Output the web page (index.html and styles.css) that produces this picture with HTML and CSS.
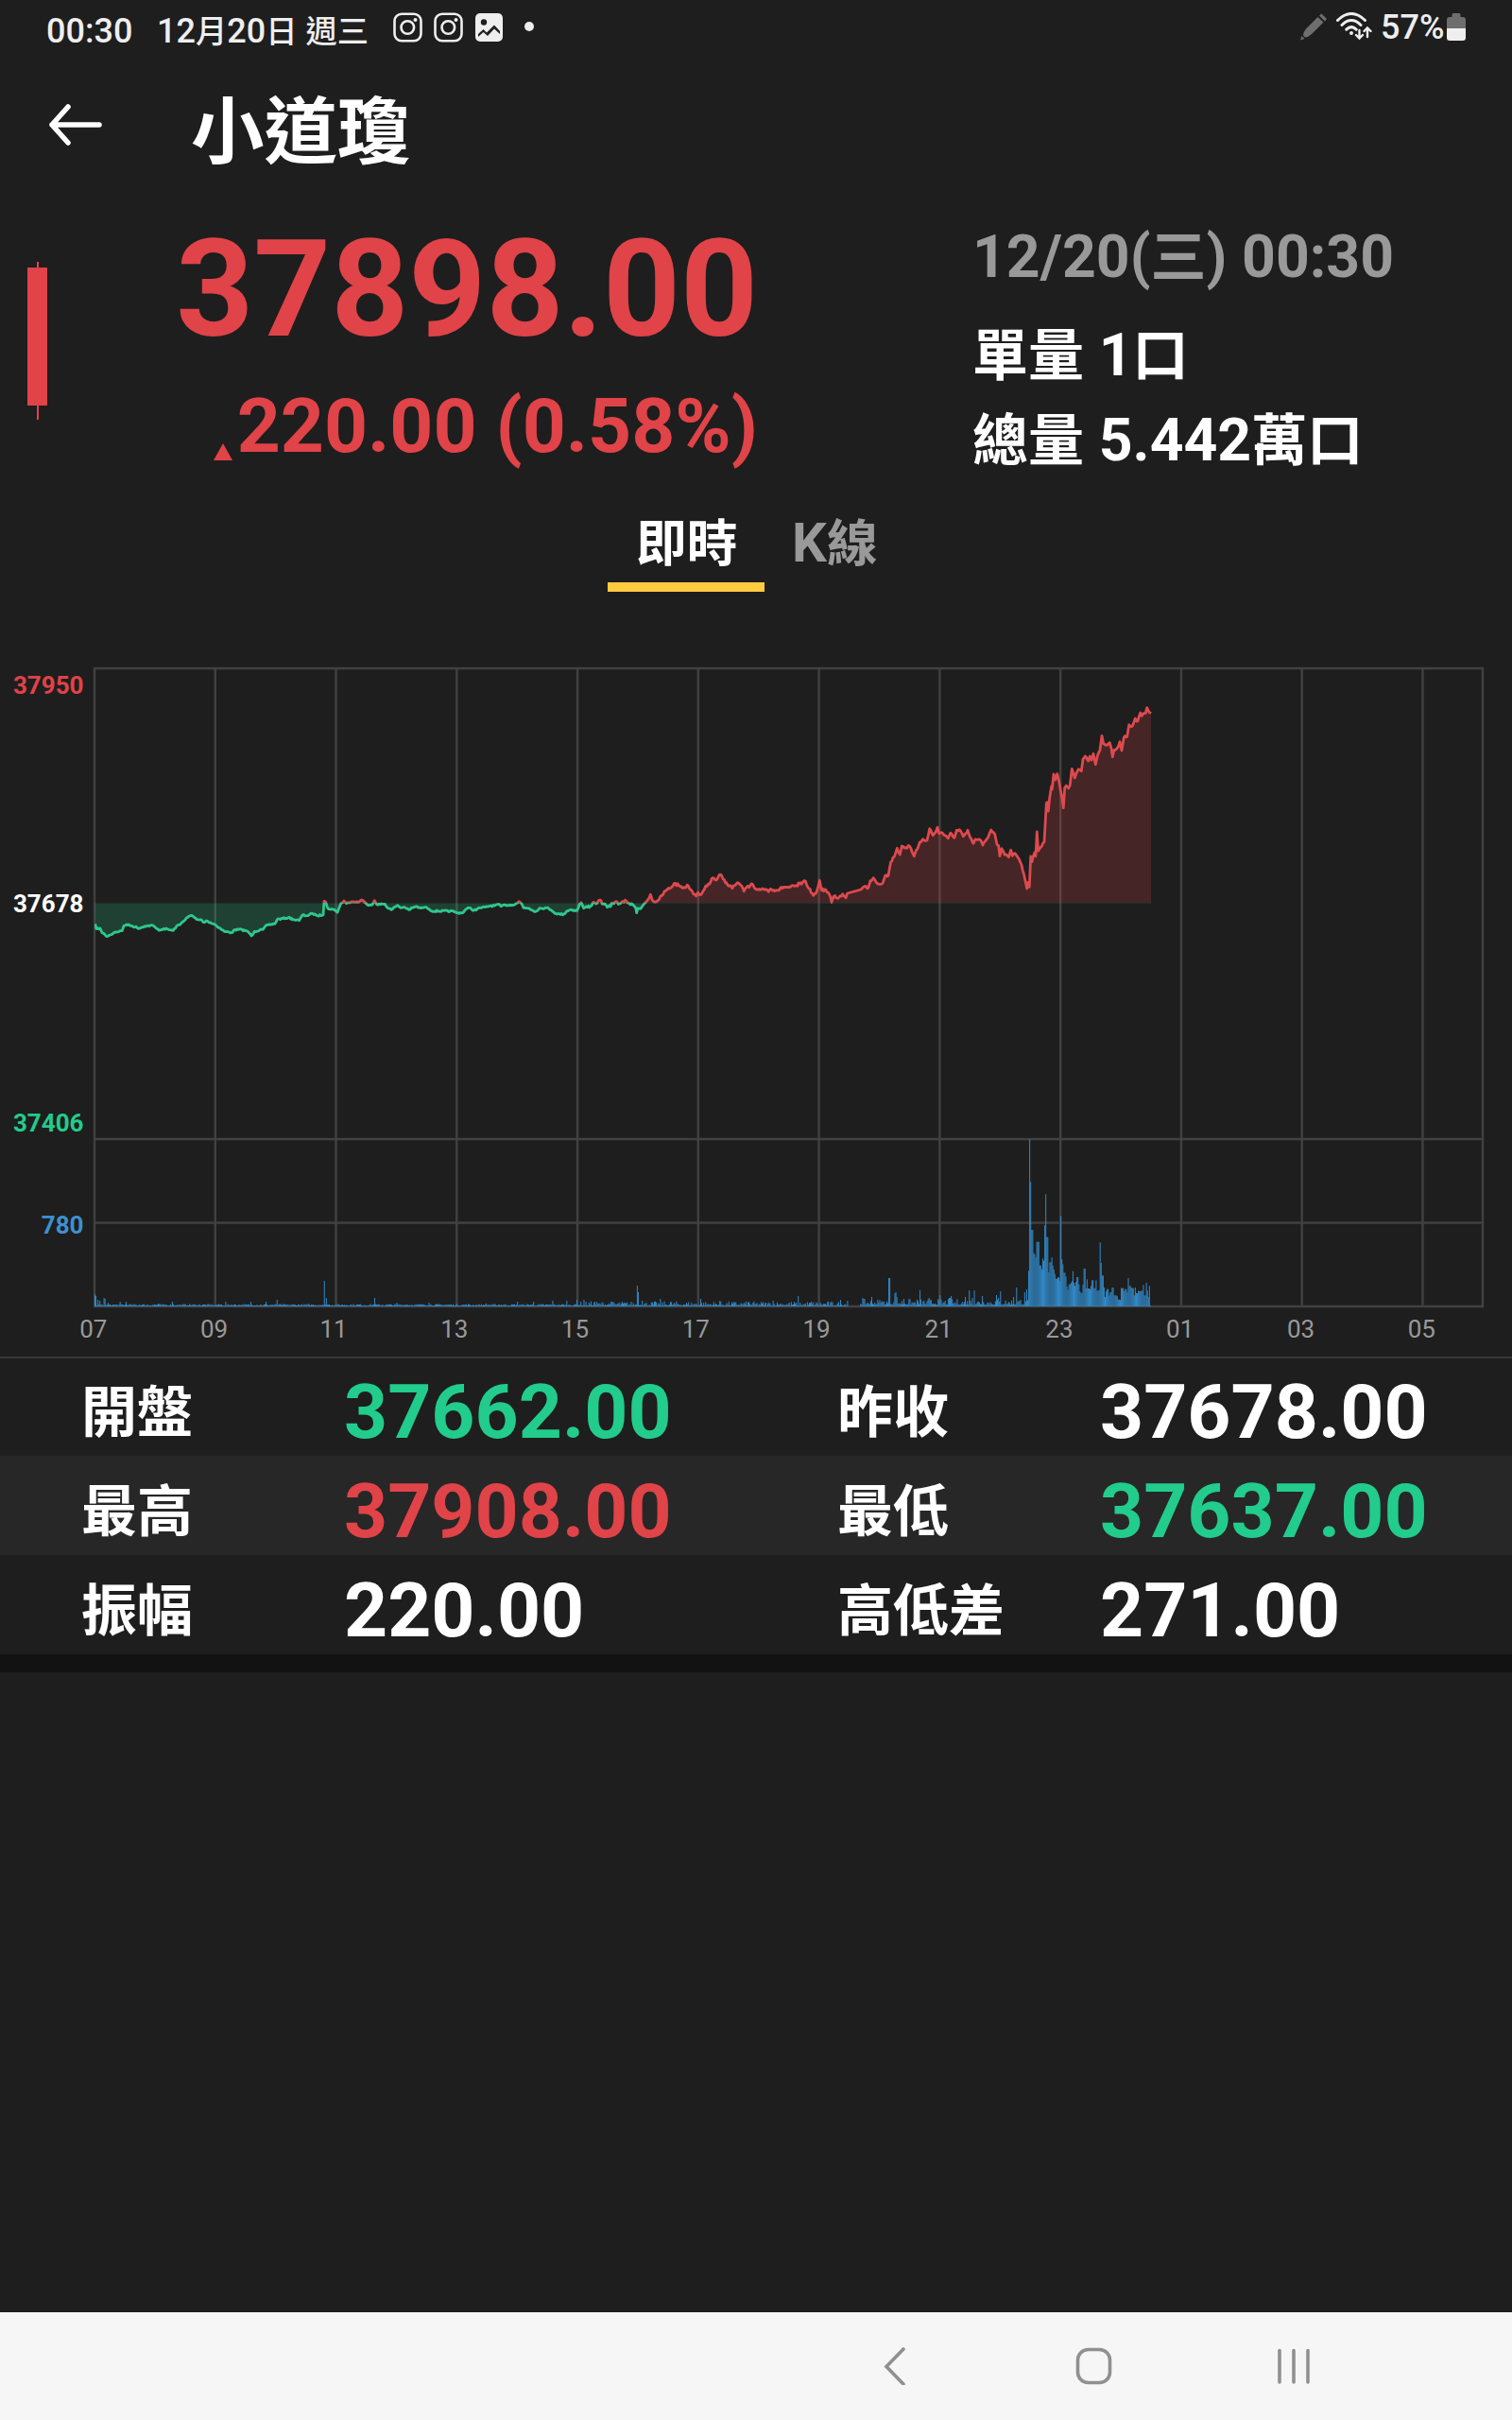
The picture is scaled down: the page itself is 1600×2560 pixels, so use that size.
FILE: index.html
```html
<!DOCTYPE html>
<html lang="zh-Hant">

<head>
    <meta charset="UTF-8">
    <meta name="viewport" content="width=device-width, initial-scale=1.0">
    <title>小道瓊</title>
    <link rel="stylesheet" href="styles.css">
</head>

<body>
    <div class="status-bar">
        <span class="time">00:30</span>
        <span class="date">12<i>月</i>20<i>日</i> <i>週三</i></span>
        <svg class="insta" width="31" height="32" viewBox="0 0 31 32">
            <rect x="1.5" y="1.7" width="28" height="28.6" rx="7.5" />
            <circle cx="15.3" cy="16" r="6.8" />
            <circle class="dot" cx="23.5" cy="8" r="2" />
        </svg>
        <svg class="insta" width="31" height="32" viewBox="0 0 31 32">
            <rect x="1.5" y="1.7" width="28" height="28.6" rx="7.5" />
            <circle cx="15.3" cy="16" r="6.8" />
            <circle class="dot" cx="23.5" cy="8" r="2" />
        </svg>
        <svg class="photo" width="29" height="30" viewBox="0 0 29 30">
            <rect width="29" height="30" rx="5" fill="#eee" />
            <circle cx="9" cy="9.5" r="3.2" fill="#1e1e1e" />
            <path d="M3 22 L8.5 17 L12 20.5 L20 12.500 L26 19 V24.500 Q26 26.500 24 26.500 H5 Q3 26.500 3 24.500 Z M3 22" fill="#1e1e1e" />
            <path d="M3 25 L8.500 20 L13 24 L20 16.500 L26 22 V28 H3 Z" fill="#eee" />
        </svg>
        <span class="more"></span>
        <div class="status-right">
            <svg width="28" height="29" viewBox="0 0 28 29">
                <path d="M0 28.500 L1.500 24 L4.500 27 Z M3 23.500 Q3 20 6 16.500 L18.500 4 L24.500 9.500 L12 22 Q8.500 25.500 5 25.500 Z M20 2.500 L22.500 0.500 L28 6 L26 8.500 Z" fill="#6e6e6e" />
            </svg>
            <svg class="wifi" width="38" height="30" viewBox="0 0 38 30">
                <path d="M1.500 8.500 Q16 -5.500 30.500 8.500 M6 13.500 Q16 3.500 26 13.500 M10.800 18.200 Q16 13.200 21.200 18.200" />
                <circle cx="16" cy="22" r="2" fill="#eee" stroke="none" />
                <path class="arrows" d="M24.500 19 V27 M21 24 L24.500 27.500 L28 24 M33 26 V16.500 M29.500 20 L33 16.500 L36.500 20" />
            </svg>
            <span class="battery-text">57%</span>
            <svg width="20" height="30" viewBox="0 0 20 30">
                <path d="M0 16 V7 Q0 4 3 4 H5.500 V1.500 Q5.500 0 7 0 H13 Q14.500 0 14.500 1.500 V4 H17 Q20 4 20 7 V16 Z" fill="#6e6e6e" />
                <path d="M0 16 H20 V26 Q20 29 17 29 H3 Q0 29 0 26 Z" fill="#eee" />
            </svg>
        </div>
    </div>

    <header class="header">
        <svg class="back" width="56" height="44" viewBox="0 0 56 44">
            <path d="M20 3 L3 22 L20 41 M3 22 H53" />
        </svg>
        <h1>小道瓊</h1>
    </header>

    <section class="quote">
        <div class="candle"><span class="wick"></span></div>
        <div class="price-box">
            <div class="price">37898.00</div>
            <div class="change"><span class="up"></span>220.00 (0.58%)</div>
        </div>
        <div class="info">
            <div class="info-time">12/20(<i>三</i>) 00:30</div>
            <div><i>單量</i> 1<i>口</i></div>
            <div><i>總量</i> 5.442<i>萬口</i></div>
        </div>
    </section>

    <nav class="tabs">
        <div class="tab active"><i>即時</i></div>
        <div class="tab">K<i>線</i></div>
    </nav>

    <svg class="chart" width="1600" height="740" viewBox="0 696 1600 740">
        <defs>
            <clipPath id="above"><rect x="100" y="700" width="1470" height="255" /></clipPath>
            <clipPath id="below"><rect x="100" y="955" width="1470" height="250" /></clipPath>
        </defs>
        <path id="grid" />
        <path id="areaUp" clip-path="url(#above)" />
        <path id="areaDown" clip-path="url(#below)" />
        <path id="lineUp" clip-path="url(#above)" />
        <path id="lineDown" clip-path="url(#below)" />
        <path id="volume" />
        <g class="y-labels">
            <text class="red" x="88.5" y="734">37950</text>
            <text x="88.5" y="965">37678</text>
            <text class="green" x="88.5" y="1197">37406</text>
            <text class="blue" x="88.5" y="1305">780</text>
        </g>
        <g id="hours" class="x-labels"></g>
    </svg>

    <section class="stats">
        <div class="row">
            <span class="label">開盤</span><span class="value green">37662.00</span>
            <span class="label">昨收</span><span class="value">37678.00</span>
        </div>
        <div class="row">
            <span class="label">最高</span><span class="value red">37908.00</span>
            <span class="label">最低</span><span class="value green">37637.00</span>
        </div>
        <div class="row">
            <span class="label">振幅</span><span class="value">220.00</span>
            <span class="label">高低差</span><span class="value">271.00</span>
        </div>
    </section>

    <footer class="nav-bar">
        <svg width="24" height="40" viewBox="0 0 24 40"><path d="M21 2 L3 20.500 L21 39" /></svg>
        <svg width="40" height="40" viewBox="0 0 40 40"><rect x="2.500" y="2.500" width="34" height="35" rx="11" /></svg>
        <svg width="36" height="40" viewBox="0 0 36 40"><path d="M3 3.500 V37 M18 3.500 V37 M33 3.500 V37" /></svg>
    </footer>

    <script src="chart.js"></script>
</body>

</html>
```
FILE: styles.css
```css
body {
    margin: 0;
    height: 2560px;
    display: flex;
    flex-direction: column;
    background-color: #1e1e1e;
    color: #fff;
    font-family: Roboto, "Noto Sans CJK TC", sans-serif;
    font-weight: bold;
    overflow: hidden;
}

svg {
    display: block;
    flex: none;
}

/* han characters sit a bit smaller than the digits */
i {
    font-style: normal;
    font-size: 0.925em;
    line-height: 0;
}

.red {
    color: #e04348;
    fill: #e04348;
}

.green {
    color: #22cc8c;
    fill: #22cc8c;
}

.blue {
    fill: #3d90d0;
}

/* status bar */
.status-bar {
    height: 60px;
    display: flex;
    align-items: flex-start;
    padding: 0 49px;
    font-size: 36px;
    font-weight: 500;
    line-height: 66px;
    color: #eee;
}

.time {
    width: 117px;
}

.date {
    width: 250px;
    white-space: nowrap;
}

.insta {
    margin: 13px 12px 0 0;
    fill: none;
    stroke: #eee;
    stroke-width: 2.6;
}

.insta .dot {
    fill: #eee;
    stroke: none;
}

.photo {
    margin: 14px 23px 0 1px;
}

.more {
    width: 10px;
    height: 10px;
    margin-top: 23px;
    border-radius: 50%;
    background-color: #eee;
}

.status-right {
    margin-left: auto;
    display: flex;
    line-height: 59px;
}

.status-right svg {
    margin-top: 14px;
}

.status-right .wifi {
    margin: 13px 9px 0 10px;
    fill: none;
    stroke: #eee;
    stroke-width: 3;
    stroke-linecap: round;
}

.wifi .arrows {
    stroke-width: 2.4;
}

.battery-text {
    width: 70px;
}

/* title */
.header {
    height: 160px;
    display: flex;
    align-items: center;
}

.back {
    margin: -16px 94px 0 52px;
    fill: none;
    stroke: #fff;
    stroke-width: 5.5;
    stroke-linecap: round;
    stroke-linejoin: round;
}

h1 {
    margin: 2px 0 0;
    font-size: 77.5px;
    line-height: 160px;
}

/* quote */
.quote {
    height: 316px;
    display: flex;
}

.candle {
    position: relative;
    width: 21px;
    height: 146px;
    margin: 63px 0 0 29px;
    background-color: #e04348;
}

.wick {
    position: absolute;
    left: 10px;
    top: -6px;
    width: 2px;
    height: 167px;
    background-color: #e04348;
}

.price-box {
    width: 752px;
    padding-top: 16px;
    text-align: right;
    color: #e04348;
}

.price {
    font-size: 143px;
    line-height: 140px;
}

.change {
    margin-top: 25px;
    font-size: 80.4px;
    line-height: 100px;
}

.up {
    display: inline-block;
    margin-right: 5px;
    border: 10px solid transparent;
    border-top: 0;
    border-bottom: 18px solid #e04348;
    vertical-align: -9px;
}

.info {
    margin-left: 227px;
    padding-top: 7px;
    font-size: 62.5px;
    line-height: 90px;
}

.info i {
    font-size: 0.945em;
}

.info-time {
    margin-bottom: 14px;
    color: #999;
}

/* tabs */
.tabs {
    height: 160px;
    display: flex;
    padding-left: 643px;
}

.tab {
    height: 80px;
    padding: 0 29px;
    font-size: 58px;
    line-height: 76px;
    color: #999;
    white-space: nowrap;
}

.tab.active {
    width: 106px;
    padding: 0 30px;
    color: #fff;
    border-bottom: 10px solid #ffcb3f;
}

/* chart */
#grid {
    fill: none;
    stroke: #414141;
    stroke-width: 2.4;
}

#areaUp {
    fill: rgba(224, 67, 72, 0.2);
}

#areaDown {
    fill: rgba(34, 204, 140, 0.2);
}

#lineUp,
#lineDown {
    fill: none;
    stroke: #dd4a4e;
    stroke-width: 2.8;
    stroke-linejoin: round;
}

#lineDown {
    stroke: #2fc78d;
}

#volume {
    fill: none;
    stroke: #328bca;
    stroke-width: 1;
}

.y-labels {
    font-size: 26px;
    text-anchor: end;
    fill: #fff;
}

.x-labels {
    font-size: 26px;
    font-weight: 400;
    text-anchor: middle;
    fill: #999;
}

/* stats */
.stats {
    border-top: 2px solid #383838;
    border-bottom: 19px solid #121212;
    margin-top: -1px;
}

.row {
    display: grid;
    grid-template-columns: 278px 522px 278px 436px;
    padding-left: 86px;
    height: 105px;
    line-height: 117px;
    overflow: hidden;
}

.row:first-child {
    height: 103px;
    line-height: 114px;
}

.row:nth-child(2) {
    background-color: #272727;
}

.label {
    padding-top: 1px;
    font-size: 59px;
}

.value {
    font-size: 80.5px;
}

/* android navigation */
.nav-bar {
    height: 114px;
    margin-top: auto;
    display: flex;
    padding-left: 935px;
    background-color: #f6f6f6;
}

.nav-bar svg {
    margin-top: 37px;
    margin-right: 179px;
    fill: none;
    stroke: #909090;
    stroke-width: 3.6;
    stroke-linecap: round;
}

.nav-bar svg:nth-child(2) {
    margin-right: 173px;
}
```
FILE: chart.js
```js
const LEFT = 100, RIGHT = 1569, STEP = 127.77;
const TOP = 707, BASE = 955.5, BOTTOM = 1382;

// grid lines and hour labels
let grid = `M${LEFT - 1} ${TOP}H${RIGHT}V${BOTTOM}H${LEFT - 1}M${LEFT} 1205H${RIGHT}M${LEFT} 1293.5H${RIGHT}`;
let hours = '';
['07', '09', '11', '13', '15', '17', '19', '21', '23', '01', '03', '05'].forEach((h, i) => {
    const x = LEFT + i * STEP;
    grid += `M${x} ${TOP}V${BOTTOM}`;
    hours += `<text x="${x - (h[0] === '1' ? 2.5 : 1.2)}" y="1415">${h}</text>`;
});
document.getElementById('grid').setAttribute('d', grid);
document.getElementById('hours').innerHTML = hours;

// price line, each session starts at its own origin, points in 1/3 px
const sessions = [
    { x: 0, y: 690, points: [302,862,306,878,318,876,324,890,340,902,350,897,365,888,388,884,393,868,402,864,420,869,442,876,460,869,485,867,497,877,508,882,520,877,535,880,550,883,560,870,572,864,580,856,592,843,608,835,625,848,640,850,646,857,655,852,668,858,682,864,700,877,712,886,735,890,745,881,768,880,788,887,798,900,808,886,835,880,848,865,872,862,880,848,915,842,935,849,950,851,960,834,975,836,992,829,1008,836,1026,833,1029,790,1034,793,1040,812,1055,815,1065,820,1071,826,1077,810,1082,797,1092,789,1100,797,1115,792,1140,792,1148,786,1156,792,1165,800,1182,801,1189,788,1196,800,1222,799,1232,812,1243,817,1255,808,1262,803,1272,811,1285,809,1298,817,1310,811,1320,807,1335,812,1350,809,1362,815,1370,821,1440,822] },
    { x: 480, y: 860, points: [10,317,28,317,40,305,50,301,65,309,85,301,100,299,115,295,130,294,140,290,150,296,165,292,185,292,198,288,208,281,216,288,222,301,240,303,260,313,272,303,295,301,310,308,328,321,350,321,360,311,372,307,392,310,400,290,405,284,413,302,435,295,445,283,456,286,465,276,475,289,488,299,498,297,502,286,512,283,530,287,548,279,558,287,572,294,578,301,581,317,585,303,598,298,605,288,617,275,625,259,631,277,640,282,652,275,662,262,672,247,690,237,700,224,715,230,730,237,745,231,758,250,770,264,776,252,784,260,800,232,812,226,820,208,830,212,840,203,850,197,856,210,866,221,885,239,900,222,915,232,922,248,930,236,938,236,945,225,955,238,962,243,980,240,995,244,1000,250,1006,241,1030,245,1048,235,1065,236,1092,232,1095,222,1105,226,1117,216,1128,240,1142,262,1153,248,1162,214,1168,245,1178,243,1192,256,1200,283,1207,264,1222,270,1235,257,1245,269,1250,255] },
    { x: 880, y: 720, points: [93,663,105,653,117,657,123,635,133,626,142,640,160,645,170,619,180,619,188,575,198,560,208,532,217,552,223,525,235,530,248,526,256,545,262,557,272,535,280,513,290,503,303,506,311,470,322,491,331,480,336,466,341,485,350,482,370,500,377,484,390,499,397,475,406,473,418,494,432,475,440,497,450,517,456,504,470,504,480,522,490,507,500,488,506,474,518,487,525,520,530,524,534,557,540,533,550,553,562,560,569,538,574,556,583,549,592,562,600,578,610,612,620,660,624,640,628,655,632,558,636,575,645,545,648,557,652,480,656,540,662,530,675,512,682,390,684,386,688,414,692,372,698,335,700,345,705,297,710,315,716,296,722,320,728,355,732,375,736,404,740,340,745,333,752,342,757,332,763,280,772,309,784,281,793,287,798,250,805,240,815,255,820,240,825,252,831,232,838,266,845,235,852,220,858,175,863,200,873,204,883,197,888,215,892,242,897,220,910,210,915,194,921,222,928,180,938,178,944,140,955,144,964,120,972,129,980,102,985,112,990,104,997,103,1001,86,1008,100,1014,104] }
];

let seed = 7;
function rand() {
    seed = (seed * 16807) % 2147483647;
    return seed / 2147483647;
}

const line = [];
sessions.forEach(s => {
    for (let i = 0; i < s.points.length; i += 2) {
        const x = s.x + s.points[i] / 3;
        const y = s.y + s.points[i + 1] / 3;
        const prev = line[line.length - 1];
        // small ticks between two far points
        if (prev && x - prev[0] > 2.6 && !(x > 898 && x < 912)) {
            const spread = x > 620 ? 3 : 1.6;
            const n = Math.floor((x - prev[0]) / 1.1);
            for (let k = 1; k < n; k++) {
                line.push([prev[0] + (x - prev[0]) * k / n, prev[1] + (y - prev[1]) * k / n + (rand() - 0.5) * spread]);
            }
        }
        line.push([x, y]);
    }
});
const linePath = 'M' + line.map(p => p[0].toFixed(1) + ' ' + p[1].toFixed(1)).join('L');
const areaPath = linePath + `V${BASE}H${LEFT}Z`;
document.getElementById('lineUp').setAttribute('d', linePath);
document.getElementById('lineDown').setAttribute('d', linePath);
document.getElementById('areaUp').setAttribute('d', areaPath);
document.getElementById('areaDown').setAttribute('d', areaPath);

// volume: single peaks, x and height
const peaks = [100,13,101,13,102,11,104,7,106,6,110,9,111,8,114,4,127,5,133,5,168,3,182,5,239,5,266,5,281,5,293,7,343,27,345,9,396,9,420,4,454,4,515,3,548,5,565,5,585,6,600,6,611,7,618,7,630,5,647,5,674,22,675,15,680,6,699,8,710,5,741,8,762,6,793,5,818,6,845,11,859,5,890,7,897,6,913,9,
    922,10,932,4,941,30,942,30,947,14,948,15,949,10,957,8,962,6,974,17,983,9,995,12,1005,9,1007,11,1022,10,1026,17,1029,9,1031,17,1040,11,1054,12,1057,9,1059,16,1073,10,1076,20,1080,7,1084,15,1086,18];
// opening rush, heights in 1/3 px
const rush = [565,113,568,530,572,395,576,243,580,170,584,165,588,155,592,205,595,205,599,130,603,130,606,118,609,152,613,145,617,257,620,356,624,220,628,108,631,110,634,140,638,155,641,130,645,117,648,103,652,88,655,88,659,92,663,80,666,287,670,150,674,134,678,107,682,95,686,63,690,52,694,70,698,75,702,80,705,112,709,75,712,65,716,78,720,93,724,70,728,48,733,43,737,70,742,120,746,58,750,86,755,57,760,55,765,65,768,83,772,58,778,83,783,50,788,52,792,203,796,138,800,98,804,60,808,30,812,48,816,55,820,35,824,45,828,45,832,60,836,35,840,35,846,32,850,22,855,20,858,58,864,58,868,48,873,55,878,45,882,90,886,65,890,60,895,58,900,35,904,60,908,42,912,50,918,48,924,50,928,68,933,35,938,75,942,50,945,30,950,65,953,3];

let volume = '';
for (let m = 0; m < 1050; m++) {
    const x = 100.5 + m * STEP / 120;
    let h = 0;
    if (x < 1088) {
        const r = rand();
        if (x < 610) h = r < 0.35 ? 1 : 1 + r * 1.5;
        else if (x < 897) h = 1 + r * r * 4.5;
        else if (x > 910) h = 2 + r * r * 6;
        for (let i = 0; i < peaks.length; i += 2) {
            if (Math.abs(peaks[i] - x) < 0.54) h = Math.max(h, peaks[i + 1]);
        }
    } else {
        for (let i = 0; i < rush.length; i += 2) {
            if (900 + rush[i] / 3 <= x + 0.4) h = rush[i + 1] / 3;
        }
    }
    if (h) volume += `M${x.toFixed(2)} ${BOTTOM}v${-h.toFixed(1)}`;
}
document.getElementById('volume').setAttribute('d', volume);
```
